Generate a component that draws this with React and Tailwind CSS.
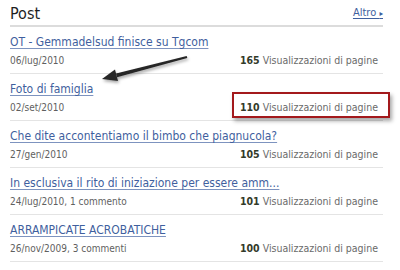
import React from 'react';

const posts = [
  { title: 'OT - Gemmadelsud finisce su Tgcom', meta: '06/lug/2010', views: 165 },
  { title: 'Foto di famiglia', meta: '02/set/2010', views: 110, marked: true },
  { title: 'Che dite accontentiamo il bimbo che piagnucola?', meta: '27/gen/2010', views: 105 },
  { title: 'In esclusiva il rito di iniziazione per essere amm...', meta: '24/lug/2010, 1 commento', views: 101 },
  { title: 'ARRAMPICATE ACROBATICHE', meta: '26/nov/2009, 3 commenti', views: 100 },
];

const PostRow = ({ post }) => (
  <div className="relative h-[47px] border-b border-[#e4e4e4] pt-[7px]">
    <a className="block text-[12px] leading-[16px] text-[#3f5f9e] underline decoration-[#7d93bf] underline-offset-[2px]">
      {post.title}
    </a>
    <div className="flex justify-between items-baseline mt-[3px] pr-[5px] text-[10px] leading-[14px]">
      <span className="text-[#5f5f5f]">{post.meta}</span>
      <span className="text-[10.5px] text-[#6a6a6a]">
        <b className="text-[#333a2a] font-bold">{post.views}</b> Visualizzazioni di pagine
      </span>
    </div>
    {post.marked && (
      <div className="absolute left-[222px] top-[18px] w-[158px] h-[26px] border-2 border-[#a3191c] shadow-[2px_3px_4px_rgba(0,0,0,0.35)]" />
    )}
  </div>
);

export default function App() {
  return (
    <div className="relative w-[400px] h-[270px] bg-white overflow-hidden font-['DejaVu_Sans_Condensed','DejaVu_Sans',sans-serif]">
      <div className="w-[373px] ml-[10px]">
        <div className="flex justify-between items-end border-b-2 border-[#dcdcdc] pt-[4px] pb-[1px]">
          <h2 className="text-[16px] leading-[20px] text-[#1e1e1e]">Post</h2>
          <a className="mb-[4px] text-[11px] leading-[13px] text-[#3f5f9e] underline underline-offset-[2px]">
            Altro <span className="text-[8px]">▸</span>
          </a>
        </div>
        {posts.map((p, i) => (
          <PostRow key={i} post={p} />
        ))}
      </div>
      <svg className="absolute left-0 top-0 pointer-events-none" width="400" height="270">
        <defs>
          <filter id="sh" x="-20%" y="-50%" width="140%" height="200%">
            <feDropShadow dx="1" dy="2" stdDeviation="1.5" floodOpacity="0.35" />
          </filter>
        </defs>
        <g filter="url(#sh)" fill="#262626">
          <path d="M187.3 58.1 L186.7 55.9 L116 73.4 L117 77.2 Z" />
          <path d="M102 79 L115 69.4 L118 81 Z" />
        </g>
      </svg>
    </div>
  );
}
